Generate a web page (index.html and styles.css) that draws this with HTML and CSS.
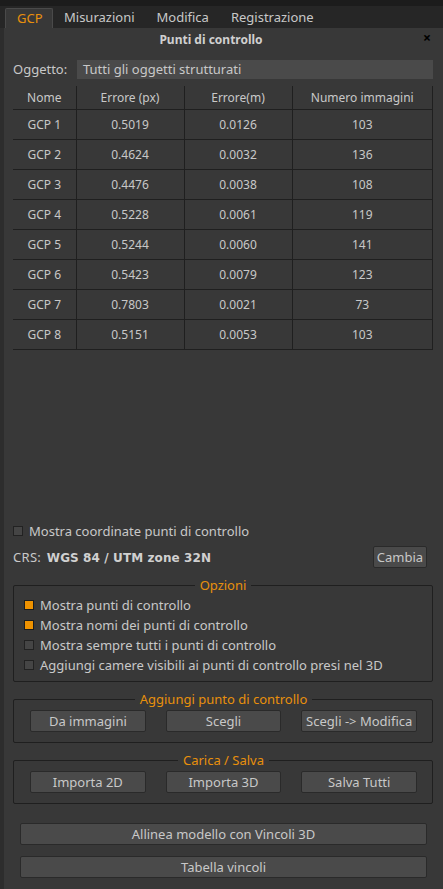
FILE: index.html
```html
<!DOCTYPE html>
<html>
<head>
<meta charset="utf-8">
<link rel="stylesheet" href="styles.css">
</head>
<body>
<div class="topstrip"></div>
<div class="tabbar">
  <div class="tab active">GCP</div>
  <div class="tab">Misurazioni</div>
  <div class="tab">Modifica</div>
  <div class="tab">Registrazione</div>
</div>
<div class="panel">
  <div class="title">Punti di controllo<span class="close">×</span></div>
  <div class="objrow">
    <span class="label">Oggetto:</span>
    <div class="combo">Tutti gli oggetti strutturati</div>
  </div>
  <table class="grid">
    <thead>
      <tr><th>Nome</th><th>Errore (px)</th><th>Errore(m)</th><th>Numero immagini</th></tr>
    </thead>
    <tbody>
      <tr><td>GCP 1</td><td>0.5019</td><td>0.0126</td><td>103</td></tr>
      <tr><td>GCP 2</td><td>0.4624</td><td>0.0032</td><td>136</td></tr>
      <tr><td>GCP 3</td><td>0.4476</td><td>0.0038</td><td>108</td></tr>
      <tr><td>GCP 4</td><td>0.5228</td><td>0.0061</td><td>119</td></tr>
      <tr><td>GCP 5</td><td>0.5244</td><td>0.0060</td><td>141</td></tr>
      <tr><td>GCP 6</td><td>0.5423</td><td>0.0079</td><td>123</td></tr>
      <tr><td>GCP 7</td><td>0.7803</td><td>0.0021</td><td>73</td></tr>
      <tr><td>GCP 8</td><td>0.5151</td><td>0.0053</td><td>103</td></tr>
    </tbody>
  </table>
  <div class="spacer"></div>
  <label class="check first"><span class="box"></span>Mostra coordinate punti di controllo</label>
  <div class="crsrow">
    <span class="crs">CRS: <b>WGS 84 / UTM zone 32N</b></span>
    <button class="btn small">Cambia</button>
  </div>
  <fieldset class="group opts">
    <legend>Opzioni</legend>
    <label class="check"><span class="box on"></span>Mostra punti di controllo</label>
    <label class="check"><span class="box on"></span>Mostra nomi dei punti di controllo</label>
    <label class="check"><span class="box"></span>Mostra sempre tutti i punti di controllo</label>
    <label class="check"><span class="box"></span>Aggiungi camere visibili ai punti di controllo presi nel 3D</label>
  </fieldset>
  <fieldset class="group btns">
    <legend>Aggiungi punto di controllo</legend>
    <button class="btn">Da immagini</button>
    <button class="btn">Scegli</button>
    <button class="btn">Scegli -&gt; Modifica</button>
  </fieldset>
  <fieldset class="group btns">
    <legend>Carica / Salva</legend>
    <button class="btn">Importa 2D</button>
    <button class="btn">Importa 3D</button>
    <button class="btn">Salva Tutti</button>
  </fieldset>
  <button class="btn wide first-wide">Allinea modello con Vincoli 3D</button>
  <button class="btn wide">Tabella vincoli</button>
</div>
</body>
</html>
```
FILE: styles.css
```css
* { box-sizing: border-box; }
html, body { margin: 0; padding: 0; }
body {
  width: 443px;
  height: 889px;
  overflow: hidden;
  background: #383838;
  color: #c8c8c8;
  font-family: "Noto Sans", "DejaVu Sans", sans-serif;
  font-size: 12px;
  display: flex;
  flex-direction: column;
}
.topstrip { height: 6px; background: #1c1c1c; flex: none; }
.tabbar {
  height: 22px;
  background: #262626;
  display: flex;
  align-items: flex-end;
  padding-left: 5px;
  flex: none;
}
.tab {
  height: 20px;
  line-height: 19px;
  padding: 0 11px;
  color: #c8c8c8;
  font-size: 13px;
}
.tab.active {
  background: #383838;
  color: #e8900c;
  border: 1px solid #4a4a4a;
  border-bottom: none;
  border-radius: 2px 2px 0 0;
  padding: 0 11px;
  width: 48px;
}
.panel {
  flex: 1;
  display: flex;
  flex-direction: column;
  border-left: 4px solid #2d2d2d;
  padding: 0 10px 0 9px;
}
.title {
  position: relative;
  height: 25px;
  line-height: 24px;
  text-align: center;
  font-weight: bold;
  font-size: 12px;
  color: #d0d0d0;
  padding-right: 24px;
}
.close {
  position: absolute;
  right: 2px;
  top: -2px;
  color: #000;
  font-weight: bold;
  font-size: 14px;
}
.objrow {
  display: flex;
  align-items: center;
  height: 20px;
  margin-top: 6px;
}
.label { width: 64px; font-size: 13px; }
.combo {
  flex: 1;
  height: 19px;
  line-height: 19px;
  background: #4a4a4a;
  padding-left: 6px;
  font-size: 13px;
}
.grid {
  margin-top: 7px;
  width: 420px;
  border-collapse: collapse;
  font-size: 12px;
}
.grid th {
  font-weight: normal;
  height: 23px;
  border-left: 1px solid #1f1f1f;
  border-bottom: 1px solid #1f1f1f;
  padding: 0;
}
.grid th:first-child, .grid td:first-child { border-left: none; }
.grid th:last-child, .grid td:last-child { border-right: 1px solid #1f1f1f; }
.grid td {
  height: 30px;
  text-align: center;
  border-left: 1px solid #1f1f1f;
  border-bottom: 1px solid #1f1f1f;
  padding: 0;
}
.grid th:nth-child(1) { width: 63px; }
.grid th:nth-child(2) { width: 108px; }
.grid th:nth-child(3) { width: 108px; }
.spacer { flex: 1; }
.check {
  display: flex;
  align-items: center;
  height: 20px;
  font-size: 13px;
}
.box {
  width: 10px;
  height: 10px;
  background: #454545;
  border: 1px solid #222;
  margin-right: 6px;
  flex: none;
}
.box.on { background: #ee9200; border-color: #1c1c1c; }
.check.first { margin-bottom: 5px; }
.crsrow {
  display: flex;
  justify-content: space-between;
  align-items: center;
  height: 22px;
  font-size: 13px;
  padding-right: 6px;
}
.crs { letter-spacing: 0.3px; }
.crsrow b {
  color: #d0d0d0;
  font-family: "DejaVu Sans", sans-serif;
  font-size: 12px;
  letter-spacing: 0.1px;
  margin-left: 2px;
}
.btn {
  background: #4a4a4a;
  border: 1px solid #2a2a2a;
  border-radius: 2px;
  color: #c8c8c8;
  font-family: inherit;
  font-size: 13px;
  height: 22px;
  padding: 0;
}
.btn.small { width: 54px; }
.group {
  border: 1px solid #1f1f1f;
  border-radius: 2px;
  margin: 0;
  min-width: 0;
}
.group legend {
  margin: 0 auto;
  padding: 0 5px;
  color: #e8900c;
  font-size: 13px;
  line-height: 12px;
}
.opts {
  margin-top: 11px;
  padding: 4px 10px 6px 10px;
}
.btns {
  margin-top: 11px;
  padding: 5px 15px 10px 16px;
  display: flex;
  gap: 20px;
}
.btns .btn { flex: 1; }
.wide { width: 407px; margin-left: 7px; flex: none; }
.first-wide { margin-top: 19px; margin-bottom: 11px; }
.panel > .wide:last-child { margin-bottom: 11px; }
```
